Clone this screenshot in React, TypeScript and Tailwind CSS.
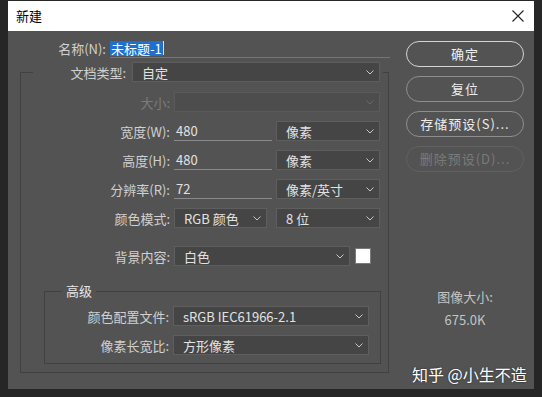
import type { ReactNode } from "react";

const cjk = "font-['Noto_Sans_CJK_SC','Noto_Sans',sans-serif]";

function Chevron({ dim }: { dim?: boolean }) {
	return (
		<svg width="8" height="5" viewBox="0 0 8 5" className="shrink-0">
			<polyline
				points="0.5,0.5 4,4 7.5,0.5"
				fill="none"
				stroke={dim ? "#6a6a6a" : "#c8c8c8"}
				strokeWidth="1"
			/>
		</svg>
	);
}

function Select({
	value,
	width,
	disabled,
}: {
	value?: string;
	width: string;
	disabled?: boolean;
}) {
	return (
		<div
			className={`${width} h-[20px] flex items-center justify-between pl-[9px] pr-[5px] border ${
				disabled ? "bg-[#4d4d4d] border-[#5a5a5a]" : "bg-[#454545] border-[#5e5e5e]"
			} text-[13px] leading-none text-[#e2e2e2]`}
		>
			<span className="whitespace-pre">{value}</span>
			<Chevron dim={disabled} />
		</div>
	);
}

function TextField({ value }: { value: string }) {
	return (
		<div className="w-[98px] h-[20px] flex items-center pl-[2px] border-b border-[#8a8a8a] text-[13px] text-[#e2e2e2] leading-none">
			{value}
		</div>
	);
}

function Row({
	label,
	labelWidth,
	disabled,
	children,
	className = "",
}: {
	label: string;
	labelWidth: string;
	disabled?: boolean;
	children: ReactNode;
	className?: string;
}) {
	return (
		<div className={`flex items-center ${className}`}>
			<div
				className={`${labelWidth} shrink-0 text-right text-[13px] leading-none ${
					disabled ? "text-[#7c7c7c]" : "text-[#d0d0d0]"
				}`}
			>
				{label}
			</div>
			<div className="ml-[4px] flex items-center gap-[4px]">{children}</div>
		</div>
	);
}

function PillButton({ label, variant }: { label: string; variant: "primary" | "normal" | "disabled" }) {
	const look =
		variant === "primary"
			? "border-[#d4d4d4] text-[#f0f0f0]"
			: variant === "normal"
				? "border-[#8e8e8e] text-[#ececec]"
				: "border-[#616161] text-[#7a7a7a]";
	return (
		<div
			className={`w-[118px] h-[26px] rounded-full border flex items-center justify-center text-[13px] tracking-[1px] ${look}`}
		>
			{label}
		</div>
	);
}

export default function App() {
	return (
		<div className={`relative w-[542px] h-[397px] bg-[#262626] overflow-hidden ${cjk}`}>
			<div className="ml-[8px] pt-px w-[526px] h-[389px] flex flex-col">
				{/* title bar */}
				<div className="h-[30px] bg-white flex items-center justify-between pl-[8px] pr-[10px]">
					<span className="text-[13px] text-black">新建</span>
					<svg width="12" height="12" viewBox="0 0 12 12">
						<path d="M0.5 0.5 L11.5 11.5 M11.5 0.5 L0.5 11.5" stroke="#222" strokeWidth="1.1" />
					</svg>
				</div>

				<div className="flex-1 bg-[#535353] flex">
					{/* form */}
					<div className="w-[384px] flex flex-col">
						<div className="mt-[8px] flex items-center">
							<div className="w-[98px] text-right text-[13px] leading-none text-[#d0d0d0]">名称(N):</div>
							<div className="ml-[4px] w-[280px] h-[19px] flex items-center border-b border-[#3d7fd6]">
								<span className="bg-[#1f6fd0] text-white text-[13px] leading-[15px] px-px">未标题-1</span>
								<span className="w-px h-[14px] bg-[#e0e0e0]" />
							</div>
						</div>

						<fieldset className="mt-[4px] ml-[12px] w-[369px] border border-[#414141] pb-[8px]">
							<legend className="ml-[12px] w-[350px] h-[20px] flex items-center">
								<div className="w-[93px] text-right text-[13px] leading-none text-[#d0d0d0]">文档类型:</div>
								<div className="ml-[6px]">
									<Select value="自定" width="w-[248px]" />
								</div>
							</legend>

							<Row label="大小:" labelWidth="w-[149px]" disabled className="mt-[10px]">
								<Select width="w-[206px]" disabled />
							</Row>
							<Row label="宽度(W):" labelWidth="w-[149px]" className="mt-[9px]">
								<TextField value="480" />
								<Select value="像素" width="w-[104px]" />
							</Row>
							<Row label="高度(H):" labelWidth="w-[149px]" className="mt-[9px]">
								<TextField value="480" />
								<Select value="像素" width="w-[104px]" />
							</Row>
							<Row label="分辨率(R):" labelWidth="w-[149px]" className="mt-[9px]">
								<TextField value="72" />
								<Select value="像素/英寸" width="w-[104px]" />
							</Row>
							<Row label="颜色模式:" labelWidth="w-[149px]" className="mt-[9px]">
								<Select value="RGB 颜色" width="w-[93px]" />
								<div className="ml-[5px]">
									<Select value="8 位" width="w-[104px]" />
								</div>
							</Row>
							<Row label="背景内容:" labelWidth="w-[149px]" className="mt-[18px]">
								<Select value="白色" width="w-[176px]" />
								<div className="ml-[1px] w-[16px] h-[16px] bg-white border border-[#7a7a7a]" />
							</Row>

							<fieldset className="mt-[17px] ml-[23px] w-[337px] border border-[#414141] pb-[8px]">
								<legend className="ml-[17px] px-[4px] text-[13px] leading-[16px] text-[#e6e6e6]">高级</legend>
								<Row label="颜色配置文件:" labelWidth="w-[124px]" className="mt-[7px]">
									<Select value="sRGB IEC61966-2.1" width="w-[196px]" />
								</Row>
								<Row label="像素长宽比:" labelWidth="w-[124px]" className="mt-[9px]">
									<Select value="方形像素" width="w-[196px]" />
								</Row>
							</fieldset>
						</fieldset>
					</div>

					{/* buttons */}
					<div className="ml-[14px] pt-[10px] flex flex-col gap-[9px]">
						<PillButton label="确定" variant="primary" />
						<PillButton label="复位" variant="normal" />
						<PillButton label="存储预设(S)..." variant="normal" />
						<PillButton label="删除预设(D)..." variant="disabled" />
						<div className="mt-[108px] w-[118px] flex flex-col items-center text-[13px] leading-[16px] text-[#c4c4c4]">
							<span>图像大小:</span>
							<span className="mt-[7px]">675.0K</span>
						</div>
					</div>
				</div>
			</div>

			{/* watermark */}
			<div className="absolute left-[412px] top-[362px] text-[16px] leading-[24px] text-white [text-shadow:0_0_2px_rgba(0,0,0,0.6)] whitespace-nowrap">
				知乎 @小生不造
			</div>
		</div>
	);
}
